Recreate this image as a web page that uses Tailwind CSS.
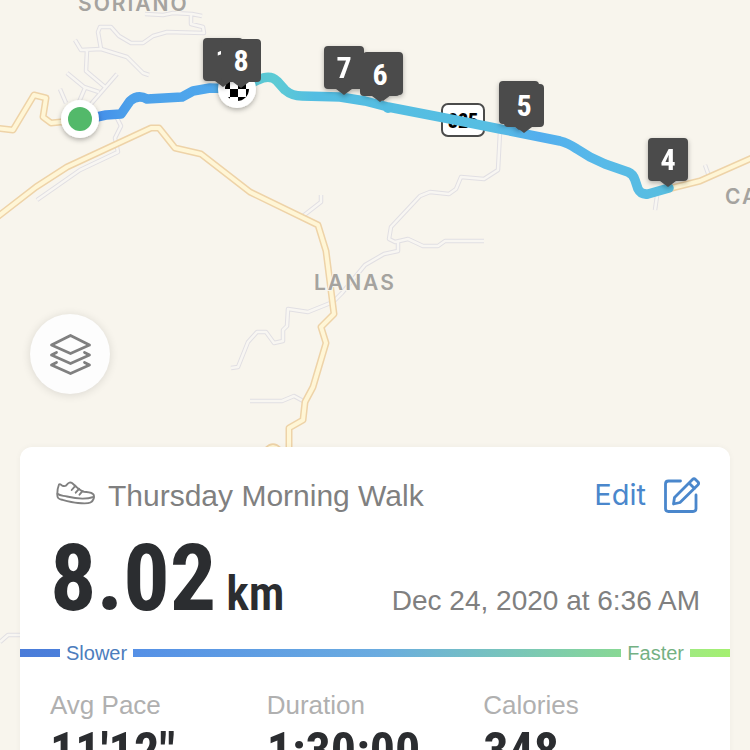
<!DOCTYPE html>
<html lang="en">
<head>
  <meta charset="UTF-8" />
  <meta name="viewport" content="width=device-width, initial-scale=1.0"/>
  <title>Thursday Morning Walk</title>
  <script src="https://cdn.jsdelivr.net/npm/@tailwindcss/browser@4"></script>
</head>
<body class="bg-[#f8f5ed] font-['Liberation_Sans',Arial,sans-serif]">

  <main class="relative h-screen overflow-hidden">

    <!-- Map -->
    <svg class="absolute inset-0 w-full h-full" viewBox="0 0 750 750" preserveAspectRatio="xMinYMin slice" role="img" aria-label="Route map">
      <defs>
        <linearGradient id="pace" gradientUnits="userSpaceOnUse" x1="96" y1="0" x2="672" y2="0">
          <stop offset="0" stop-color="#438eea"/>
          <stop offset="0.06" stop-color="#4da1ea"/>
          <stop offset="0.2" stop-color="#4fa7ec"/>
          <stop offset="0.26" stop-color="#58c3d4"/>
          <stop offset="0.31" stop-color="#5dcbd4"/>
          <stop offset="0.38" stop-color="#53bde2"/>
          <stop offset="0.68" stop-color="#57bee2"/>
          <stop offset="0.77" stop-color="#53aeee"/>
          <stop offset="0.88" stop-color="#58bae8"/>
          <stop offset="1" stop-color="#58bedf"/>
        </linearGradient>
        <filter id="shadow" x="-40%" y="-40%" width="180%" height="180%">
          <feDropShadow dx="0" dy="2" stdDeviation="2.5" flood-color="#000" flood-opacity="0.3"/>
        </filter>
        <clipPath id="flag"><circle cx="237" cy="89" r="12"/></clipPath>
        <g id="pin">
          <path d="M-16 -49H16Q20 -49 20 -45V-10Q20 -6 16 -6H8L0 0L-8 -6H-16Q-20 -6 -20 -10V-45Q-20 -49 -16 -49Z" fill="#4b4b4b"/>
        </g>
        <g id="lanes">
          <path d="M145 14L163 15L173 13L192 14L202 16M191 14V24L203 27L204 33L167 32L153 36L143 43H131L119 36L111 27L100 27L98 32L101 49"/>
          <path d="M75 40L81 50L101 49L127 57L143 73L149 75M87 50L86 71L105 87M67 73L84 87L99 92M117 74L91 104M85 88L79 102M60 89L66 103M117 118L121 126L115 138L118 152L80 170L37 200"/>
          <path d="M303 216L321 202V195M500 132L498 170L484 179L461 177L456 189L449 194L430 192L420 196L391 227L389 239L395 242L408 239L423 246H438L445 241H484M398 242V251L384 254L365 265L342 293L333 302L308 312L288 309L287 326L283 330V341L274 343L266 332H257L248 342L238 367L231 368"/>
          <path d="M250 401H282L294 396L305 402M705 165L709 176M657 196L655 210M0 642L8 635H24"/>
        </g>
        <g id="roads">
          <path d="M-4 128L13 130L34 95L46 98L43 117L51 123L80 120"/>
          <path d="M-4 218L36 187L67 167L151 128H159L175 148L201 154L250 192L318 225L326 251L334 314L321 327L326 343L313 387L305 402L303 420L289 428V455"/>
          <path d="M267 450Q273 444 279 450M668 189L700 181L752 158"/>
        </g>
      </defs>

      <!-- Streets -->
      <g fill="none" stroke-linejoin="round">
        <use href="#lanes" stroke="#e1dfe3" stroke-width="4.5"/>
        <use href="#lanes" stroke="#f8f6f2" stroke-width="2.5"/>
        <use href="#roads" stroke="#eed3a8" stroke-width="7"/>
        <use href="#roads" stroke="#fff6d6" stroke-width="4"/>
      </g>

      <!-- Place names -->
      <g fill="#a5a39f" stroke="#f8f5ed" stroke-width="2" paint-order="stroke" class="font-['Inter',sans-serif] text-[21px] font-semibold tracking-[2px]">
        <text x="78" y="11">SORIANO</text>
        <text x="314" y="290">LANAS</text>
        <text x="725" y="204">CARIDAD</text>
      </g>

      <!-- Highway shield -->
      <rect x="442" y="104" width="42" height="32" rx="6" fill="#fff" stroke="#4b4b4b" stroke-width="2"/>
      <text x="463" y="128" text-anchor="middle" class="font-['Roboto_Condensed',Roboto,sans-serif] text-[20px] font-black">825</text>

      <!-- Route -->
      <path d="M92 118L106 115L121 114L130 101Q138 94 147 99L182 97L193 91L210 88L237 89L258 80Q270 74 277 81L285 90Q292 96 302 96L340 97L365 101L388 107L450 119L500 129L540 137L560 141Q568 143 577 149L590 157L605 164L628 172Q633 174 635 180L638 189Q641 195 648 194L669 188" fill="none" stroke="url(#pace)" stroke-width="9.5" stroke-linecap="round" stroke-linejoin="round"/>
      <circle cx="388" cy="108" r="5" fill="#53bde2"/>

      <!-- Start and finish -->
      <circle cx="80" cy="119" r="19" fill="#fff" filter="url(#shadow)"/>
      <circle cx="80" cy="119" r="12" fill="#53b96a"/>
      <circle cx="237" cy="89" r="19" fill="#fff" filter="url(#shadow)"/>
      <path clip-path="url(#flag)" d="M230 73h8v8h-8zM222 81h8v8h-8zM238 81h8v8h-8zM230 89h8v8h-8zM246 89h8v8h-8zM222 97h8v8h-8zM238 97h8v8h-8z"/>

      <!-- Kilometre markers -->
      <g fill="#fff" text-anchor="middle" class="font-['Roboto_Condensed',Roboto,sans-serif] text-[30px] font-bold">
        <g filter="url(#shadow)"><use href="#pin" x="223" y="87"/><text x="223" y="70">1</text></g>
        <g filter="url(#shadow)"><use href="#pin" x="383" y="101"/></g>
        <g filter="url(#shadow)"><use href="#pin" x="519" y="130"/></g>
        <use href="#pin" x="241" y="88"/><text x="241" y="71">8</text>
        <g filter="url(#shadow)"><use href="#pin" x="344" y="95"/><text x="344" y="78">7</text></g>
        <use href="#pin" x="380" y="102"/><text x="380" y="85">6</text>
        <use href="#pin" x="524" y="133"/><text x="524" y="116">5</text>
        <g filter="url(#shadow)"><use href="#pin" x="668" y="187"/><text x="668" y="170">4</text></g>
      </g>
    </svg>

    <!-- Map controls -->
    <div class="relative h-[447px] flex items-end px-[30px] pb-[53px]">
      <button type="button" aria-label="Map layers" class="size-20 rounded-full bg-[#fdfdfd] shadow-[0_1px_10px_rgba(0,0,0,0.12)] flex items-center justify-center">
        <svg class="size-11" viewBox="0 0 44 44" fill="none" stroke="#808080" stroke-width="2.8" stroke-linejoin="round" stroke-linecap="round">
          <path d="M22.500 3.500L41.500 13L22.500 21.500L3.500 13Z"/>
          <path d="M8.500 20.500L3.500 23L22.500 31.500L41.500 23L36.500 20.500"/>
          <path d="M8.500 30.500L3.500 33L22.500 41.500L41.500 33L36.500 30.500"/>
        </svg>
      </button>
    </div>

    <!-- Workout summary -->
    <section class="relative mx-5 bg-white rounded-t-xl shadow-[0_0_6px_rgba(0,0,0,0.04)] pt-7 pb-10">
      <div class="flex items-center h-10 px-[30px]">
        <svg class="w-10 h-8 ml-1.5 mr-3" viewBox="0 0 40 32" fill="none" stroke="#808080" stroke-width="1.9" stroke-linejoin="round" stroke-linecap="round">
          <path d="M3 5.500C4.500 4 5.500 7 7.500 7C9.500 7.500 10.500 6.500 11.500 5C12.500 3.500 14.500 3 16 4C18 5.500 19 7 21 8.500C23 10 25 12 28 12.700C32 13.200 36 13 37.500 15.500C38.700 18 37.500 22 34.500 23.500C32 24.700 27 24.500 22 24C17 23.500 11 22 6.500 20.800C3.500 20.200 1.800 20 1.500 17.500C1 13 2 8 3 5.500Z"/>
          <path d="M1.500 14.800C4 17 7 16.500 11 17.500C17 19 27 21.500 37.500 18M15.700 11L19.300 6.800M19.700 13.700L23 9.800M23.500 15.700L26.500 12.200"/>
        </svg>
        <h1 class="text-[30px] text-[#808080]">Thursday Morning Walk</h1>
        <button type="button" class="ml-auto flex items-center gap-3.5 text-[#4a87cc] font-['Inter',sans-serif] text-[29px]">
          Edit
          <svg class="size-10" viewBox="0 0 40 40" fill="none" stroke="currentColor" stroke-width="2.8" stroke-linejoin="round" stroke-linecap="round">
            <path d="M20.500 6H8.500Q5.500 6 5.500 9V33.500Q5.500 36.500 8.500 36.500H33Q36 36.500 36 33.500V20"/>
            <path d="M13.500 29L14.500 22.500L32.500 4.500Q34 3 35.500 4.500L38 7Q39.300 8.500 37.800 10L20 27.500ZM29 8L34.500 13.500"/>
          </svg>
        </button>
      </div>

      <div class="mt-4 px-[30px] flex items-baseline justify-between">
        <p class="font-['Roboto_Condensed',Roboto,sans-serif] font-bold text-[#2b2d30] text-[92px] leading-[96px] flex items-baseline gap-2.5">8.02 <span class="text-[48px] leading-none font-semibold">km</span></p>
        <p class="text-[28px] leading-8 text-[#808080]">Dec 24, 2020 at 6:36 AM</p>
      </div>

      <!-- Pace legend -->
      <div class="mt-3.5 h-6 flex items-center gap-1.5 text-xl leading-6">
        <span class="w-10 h-2 bg-linear-to-r from-[#4a7cd9] to-[#4b7fdb]"></span>
        <span class="text-[#4d7dbd]">Slower</span>
        <span class="flex-1 h-2 bg-linear-to-r from-[#5590e6] via-[#6aabe0] to-[#88d894]"></span>
        <span class="text-[#74b183]">Faster</span>
        <span class="w-10 h-2 bg-linear-to-r from-[#a0ea80] to-[#a4f070]"></span>
      </div>

      <dl class="mt-6 px-[30px] grid grid-cols-3 text-[#b0b0b0] text-[26px] leading-8">
        <div>
          <dt>Avg Pace</dt>
          <dd class="font-['Roboto_Condensed',Roboto,sans-serif] font-bold text-[#2b2d30] text-[50px] leading-[60px]">11'12"</dd>
        </div>
        <div>
          <dt>Duration</dt>
          <dd class="font-['Roboto_Condensed',Roboto,sans-serif] font-bold text-[#2b2d30] text-[50px] leading-[60px]">1:30:00</dd>
        </div>
        <div>
          <dt>Calories</dt>
          <dd class="font-['Roboto_Condensed',Roboto,sans-serif] font-bold text-[#2b2d30] text-[50px] leading-[60px]">348</dd>
        </div>
      </dl>
    </section>

  </main>

</body>
</html>
